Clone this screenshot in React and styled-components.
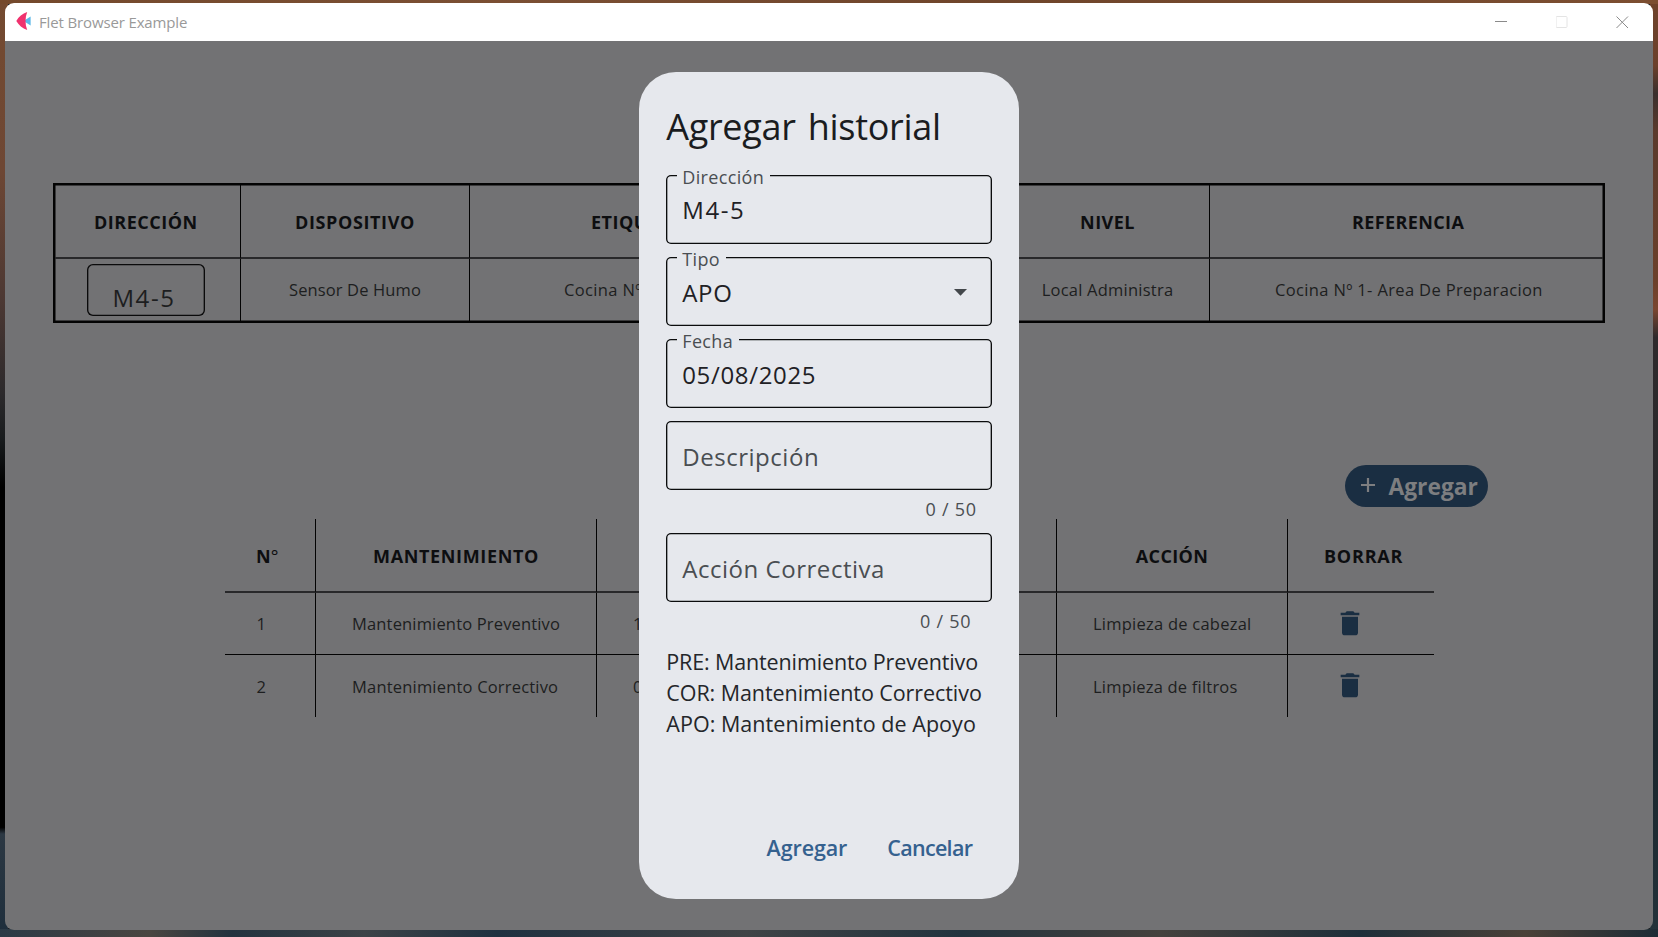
import React from "react";
import styled, { createGlobalStyle, css } from "styled-components";

const GlobalStyle = createGlobalStyle`
  *, *::before, *::after { box-sizing: border-box; }
  body {
    margin: 0;
    overflow: hidden;
    font-family: "Open Sans", "Noto Sans", sans-serif;
    color: #1a1c20;
  }
`;

const Desktop = styled.div`
  width: 1658px;
  height: 937px;
  padding: 3px 5px 7px;
  background:
    linear-gradient(90deg, #2b3a46, #4a4641 9%, #23333f 14%, #3c4347 22%, #1f3140 30%, #3f4446 45%, #22333e 58%, #45423e 70%, #1e2f3a 82%, #4a4138 92%, #1d2c36) 0 100% / 100% 8px no-repeat,
    linear-gradient(90deg, #74492c, #7b4f33 30%, #6f452b 60%, #7c4e31) 0 0 / 100% 4px no-repeat,
    linear-gradient(180deg, #744a30, #6e4734 18%, #4c3833 32%, #2c2a2c 42%, #181b1d 47%, #000 52%, #000 88.3%, #2c3843 89%, #1e2e3c) 0 0 / 8px 100% no-repeat,
    linear-gradient(180deg, #6f432b, #6b402b 7%, #3a2f2d 10%, #5a3a2c 14%, #6b402b 30%, #7a4630 33%, #2e2a2c 36%, #26282b 60%, #1a262d 80%, #23323a) 100% 0 / 8px 100% no-repeat,
    #1c1f22;
`;

const Window = styled.div`
  height: 927px;
  display: flex;
  flex-direction: column;
  border-radius: 9px;
  overflow: hidden;
`;

const TitleBar = styled.header`
  height: 38px;
  flex: none;
  display: flex;
  align-items: center;
  padding: 0 24px 0 10px;
  background: #fff;
`;

const WindowTitle = styled.span`
  flex: 1;
  margin-left: 7px;
  font-size: 15px;
  line-height: 20px;
  letter-spacing: -0.14px;
  color: #999;
`;

const WindowControls = styled.div`
  display: flex;
  gap: 47.5px;
`;

const Page = styled.main`
  position: relative;
  flex: 1;
  background: #727274;
  color: #0d0e10;
`;

const DeviceTable = styled.section`
  width: 1552px;
  margin: 142px 0 0 48px;
  padding: 2px;
  display: grid;
  grid-template-columns: 186px 229px 333px 203px 204px 1fr;
  grid-template-rows: 74px 61.5px;
  box-shadow: inset 0 0 0 2.5px #030303;
`;

const HistoryTable = styled.section`
  width: 1209px;
  margin: 12.5px 0 0 220px;
  display: grid;
  grid-template-columns: 91px 281px 460px 231px 1fr;
  grid-template-rows: 74px 62px 62px;
`;

const Cell = styled.div`
  display: flex;
  align-items: center;
  justify-content: ${(p) => (p.$pad === undefined ? "center" : "flex-start")};
  padding-left: ${(p) => p.$pad || 0}px;
  white-space: nowrap;
  overflow: hidden;
  letter-spacing: ${(p) => p.$track || 0}px;
  ${(p) => !p.$last && css`border-right: 1px solid #030303;`}
  ${(p) => p.$line && css`border-bottom: 1px solid #030303;`}
`;

const HeadCell = styled(Cell)`
  padding-top: 2px;
  font-size: 18px;
  font-weight: 700;
  border-bottom: 2px solid #28282a;
`;

const DataCell = styled(Cell)`
  font-size: 16.5px;
  color: #1d1e20;
`;

const Degree = styled.span`
  font-weight: 400;
`;

const AddressBox = styled.div`
  width: 118px;
  height: 52.5px;
  margin-left: -4px;
  padding: 6px 3px 0 0;
  border-radius: 6px;
  box-shadow: inset 0 0 0 1.35px #0a0a0b;
  text-align: center;
  font-size: 24px;
  line-height: 55px;
  letter-spacing: 1.6px;
`;

const Toolbar = styled.div`
  display: flex;
  justify-content: flex-end;
  margin: 142px 165px 0 0;
`;

const AddButton = styled.button`
  width: 143px;
  height: 42px;
  display: flex;
  align-items: center;
  gap: 12.5px;
  padding: 2px 0 0 15px;
  border: 0;
  border-radius: 21px;
  background: #1a2e42;
  color: #7d7e80;
  font: 700 22.8px/40px "Open Sans", sans-serif;

  svg { margin-top: -3px; }
`;

const Overlay = styled.div`
  position: absolute;
  inset: 0;
  display: flex;
  align-items: center;
  justify-content: center;
`;

const Dialog = styled.div`
  width: 379.5px;
  height: 827px;
  display: flex;
  flex-direction: column;
  padding: 31px 27px 0;
  border-radius: 37px;
  background: #e6e8ed;
  color: #1a1c20;
`;

const DialogTitle = styled.h1`
  margin: 0 0 24px;
  font-size: 36px;
  font-weight: 400;
  line-height: 48px;
  letter-spacing: -0.3px;
  word-spacing: 3px;
`;

const Field = styled.div`
  position: relative;
  flex: none;
  height: 69px;
  margin-bottom: ${(p) => (p.$counted ? 0 : 13)}px;
  padding: ${(p) => p.$drop ?? 2.5}px 25px 0 16px;
  display: flex;
  align-items: center;
  justify-content: space-between;
  border-radius: 5px;
  box-shadow: inset 0 0 0 1.35px #0b0c0d;
`;

const FieldLabel = styled.label`
  position: absolute;
  top: -10px;
  left: 11px;
  padding: 0 6px 0 5px;
  background: #e6e8ed;
  color: #4a4e52;
  font-size: 18px;
  line-height: 24px;
  letter-spacing: 0.35px;
`;

const FieldText = styled.span`
  font-size: 24px;
  line-height: 66px;
  letter-spacing: ${(p) => p.$track || 0.53}px;
  color: ${(p) => (p.$hint ? "#4a4e52" : "#1f2125")};
`;

const Counter = styled.div`
  height: ${(p) => p.$height}px;
  flex: none;
  padding-right: ${(p) => p.$right}px;
  text-align: right;
  font-size: 18px;
  line-height: 38px;
  letter-spacing: 0.75px;
  color: #4a4e52;
`;

const Notes = styled.div`
  display: flex;
  flex-direction: column;
  font-size: 21.5px;
  line-height: 31px;
  white-space: nowrap;
  color: #24262a;
`;

const Note = styled.span`
  letter-spacing: ${(p) => p.$track}px;
`;

const Actions = styled.div`
  display: flex;
  justify-content: flex-end;
  gap: 40px;
  margin: 94px 19.5px 0 0;
`;

const TextButton = styled.button`
  padding: 0;
  border: 0;
  background: none;
  color: #35618f;
  font: 600 21.5px/30px "Open Sans", sans-serif;
  letter-spacing: ${(p) => p.$track}px;
`;

const FletLogo = () => (
  <svg width="17" height="20" viewBox="0 0 17 20">
    <path d="M8.5 9 15.6 4.6V13.6Z" fill="#5cb8e8" />
    <path d="M12.2 0C7.5 1.4 3.5 4.8 1.3 9c2.2 4 6.2 7.4 10.9 9-2.2-5.5-2.2-12.5 0-18Z" fill="#f0326e" />
  </svg>
);

const ControlIcon = ({ children, color }) => (
  <svg width="13" height="13" viewBox="0 0 13 13" fill="none" stroke={color}>{children}</svg>
);

const TrashIcon = () => (
  <svg width="32" height="32" viewBox="0 0 24 24" fill="#1a2e42">
    <path d="M6 18.5c0 1.1.9 2 2 2h8c1.1 0 2-.9 2-2V6.5H6v12zM19 3.5h-3.5l-1-1h-5l-1 1H5v2h14V3.5z" />
  </svg>
);

const CaretIcon = () => (
  <svg width="13" height="7" viewBox="0 0 13 7"><path d="M0 0h13L6.5 6.7z" fill="#43474b" /></svg>
);

const history = [
  { n: "1", type: "Mantenimiento Preventivo", typeTrack: 0.16, date: "1", action: "Limpieza de cabezal", actionTrack: 0.24 },
  { n: "2", type: "Mantenimiento Correctivo", typeTrack: 0.19, date: "0", action: "Limpieza de filtros", actionTrack: 0.2 },
];

export default function App() {
  return (
    <>
      <GlobalStyle />
      <Desktop>
        <Window>
          <TitleBar>
            <FletLogo />
            <WindowTitle>Flet Browser Example</WindowTitle>
            <WindowControls>
              <ControlIcon color="#8a8a8a"><path d="M0 5.5h12" /></ControlIcon>
              <ControlIcon color="#e4e4e4"><rect x="0" y=".5" width="11" height="11" rx="1" /></ControlIcon>
              <ControlIcon color="#8a8a8a"><path d="M.5.5 12 12M12 .5.5 12" /></ControlIcon>
            </WindowControls>
          </TitleBar>
          <Page>
            <DeviceTable>
              <HeadCell $pad={39} $track={0.5}>DIRECCIÓN</HeadCell>
              <HeadCell $track={0.62}>DISPOSITIVO</HeadCell>
              <HeadCell $pad={121} $track={0.5}>ETIQUETA</HeadCell>
              <HeadCell />
              <HeadCell $track={0.48}>NIVEL</HeadCell>
              <HeadCell $last $pad={142} $track={0.39}>REFERENCIA</HeadCell>
              <DataCell><AddressBox>M4-5</AddressBox></DataCell>
              <DataCell $track={0.12}>Sensor De Humo</DataCell>
              <DataCell $pad={94} $track={0.35}>Cocina Nº 1</DataCell>
              <DataCell />
              <DataCell $track={0.23}>Local Administra</DataCell>
              <DataCell $last $pad={65} $track={0.35}>Cocina Nº 1- Area De Preparacion</DataCell>
            </DeviceTable>
            <Toolbar>
              <AddButton>
                <svg width="16" height="16" viewBox="0 0 16 16" stroke="#7d7e80" strokeWidth="2.2">
                  <path d="M8 1v14M1 8h14" />
                </svg>
                Agregar
              </AddButton>
            </Toolbar>
            <HistoryTable>
              <HeadCell $pad={31}>N<Degree>°</Degree></HeadCell>
              <HeadCell $track={0.65}>MANTENIMIENTO</HeadCell>
              <HeadCell />
              <HeadCell $track={0.37}>ACCIÓN</HeadCell>
              <HeadCell $last $pad={36} $track={0.78}>BORRAR</HeadCell>
              {history.map((row, i) => {
                const line = i < history.length - 1;
                return (
                  <React.Fragment key={row.n}>
                    <DataCell $line={line} $pad={31.5}>{row.n}</DataCell>
                    <DataCell $line={line} $pad={36} $track={row.typeTrack}>{row.type}</DataCell>
                    <DataCell $line={line} $pad={36}>{row.date}</DataCell>
                    <DataCell $line={line} $pad={36} $track={row.actionTrack}>{row.action}</DataCell>
                    <DataCell $line={line} $last $pad={46}><TrashIcon /></DataCell>
                  </React.Fragment>
                );
              })}
            </HistoryTable>
            <Overlay>
              <Dialog>
                <DialogTitle>Agregar historial</DialogTitle>
                <Field $drop={1}>
                  <FieldLabel>Dirección</FieldLabel>
                  <FieldText $track={1.6}>M4-5</FieldText>
                </Field>
                <Field>
                  <FieldLabel>Tipo</FieldLabel>
                  <FieldText $track={0.69}>APO</FieldText>
                  <CaretIcon />
                </Field>
                <Field>
                  <FieldLabel>Fecha</FieldLabel>
                  <FieldText $track={0.65}>05/08/2025</FieldText>
                </Field>
                <Field $counted><FieldText $hint>Descripción</FieldText></Field>
                <Counter $height={43} $right={15}>0 / 50</Counter>
                <Field $counted><FieldText $hint>Acción Correctiva</FieldText></Field>
                <Counter $height={44} $right={20.5}>0 / 50</Counter>
                <Notes>
                  <Note $track={-0.13}>PRE: Mantenimiento Preventivo</Note>
                  <Note $track={-0.07}>COR: Mantenimiento Correctivo</Note>
                  <Note $track={0.05}>APO: Mantenimiento de Apoyo</Note>
                </Notes>
                <Actions>
                  <TextButton $track={-0.1}>Agregar</TextButton>
                  <TextButton $track={-0.7}>Cancelar</TextButton>
                </Actions>
              </Dialog>
            </Overlay>
          </Page>
        </Window>
      </Desktop>
    </>
  );
}
